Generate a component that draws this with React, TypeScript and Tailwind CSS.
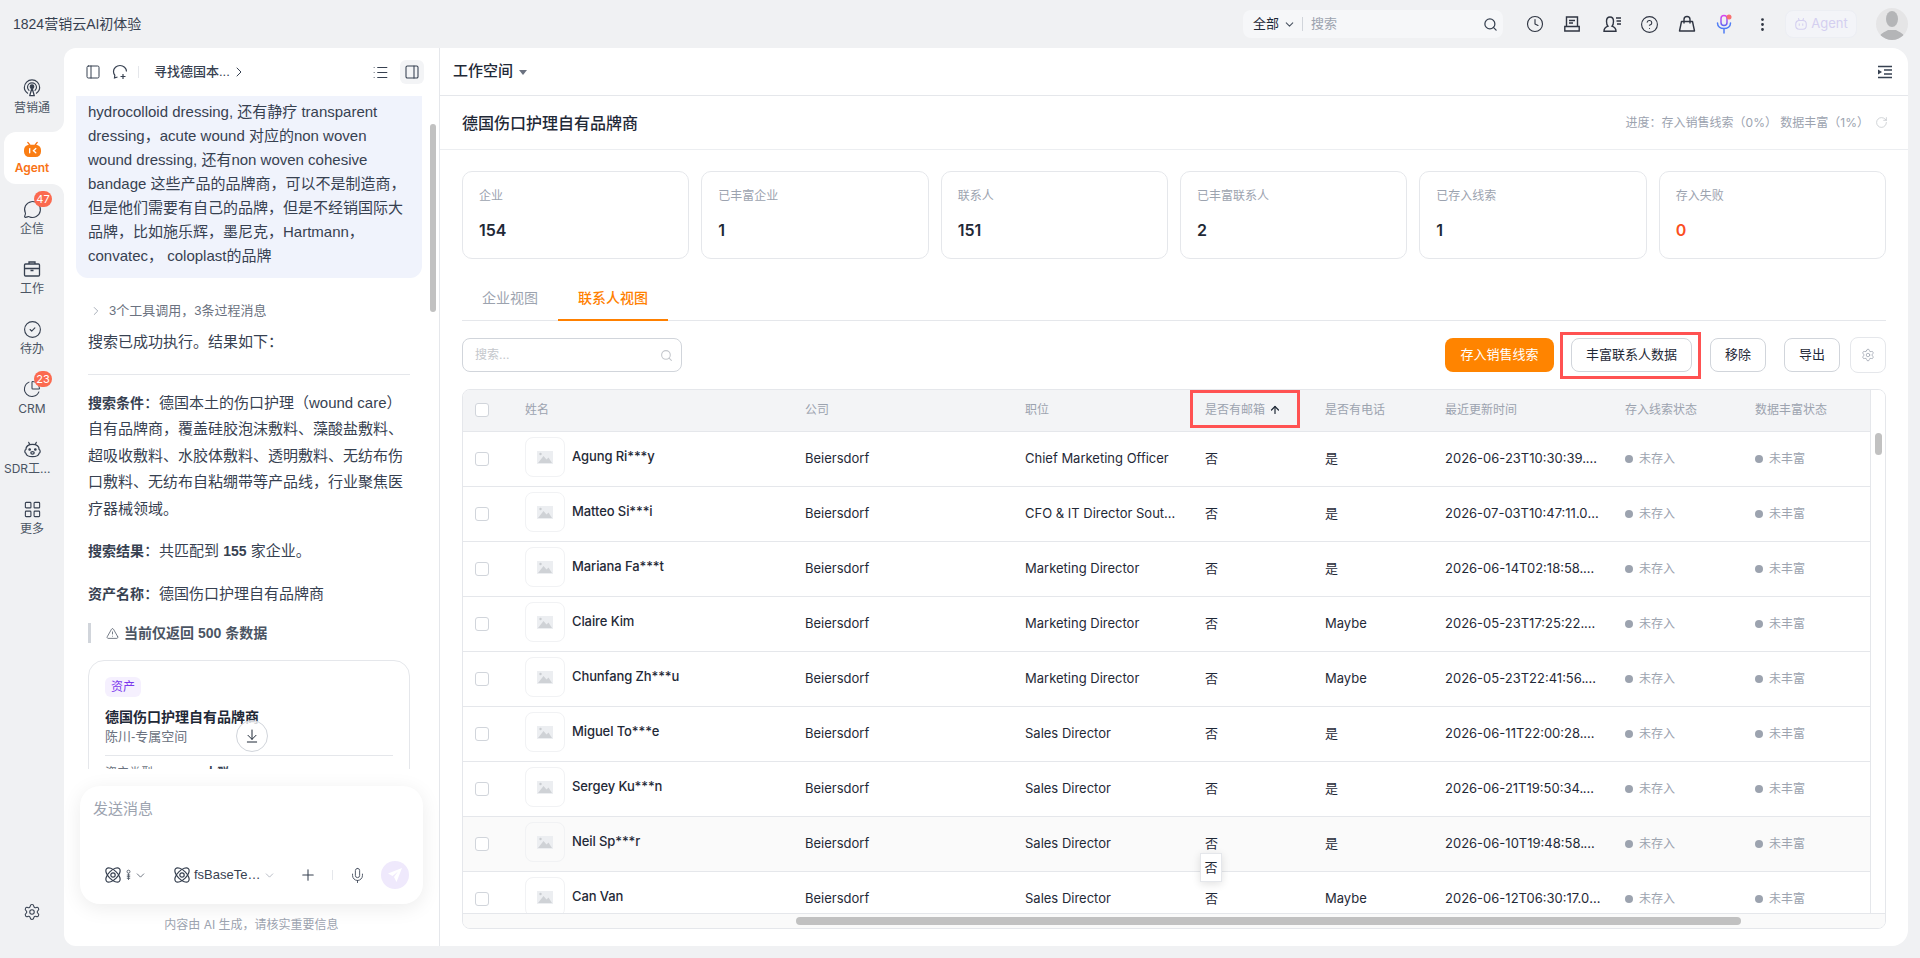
import React from "react";
import { ChevronDown, ChevronRight, Search, CircleHelp, Clock, EllipsisVertical, RotateCw, MessageCircle, CircleCheck, Settings, Plus, Mic, ArrowDownToLine, ArrowUp, TriangleAlert, List, PanelRight, PanelLeft, ChartPie, LayoutGrid } from "lucide-react";

const FONT = "font-['Inter','Noto_Sans_CJK_SC',sans-serif]";
const CHAT = "font-['Liberation_Sans','Noto_Sans_CJK_SC',sans-serif]";

function Atom({ className = "" }: { className?: string }) {
  return (
    <svg viewBox="0 0 16 16" fill="none" stroke="currentColor" strokeWidth="1.200" className={className}>
      <circle cx="8" cy="8" r="2.200" />
      <ellipse cx="8" cy="8" rx="9" ry="4.500" transform="rotate(45 8 8)" />
      <ellipse cx="8" cy="8" rx="9" ry="4.500" transform="rotate(-45 8 8)" />
    </svg>
  );
}

function BroadcastIcon() {
  return (
    <svg viewBox="0 0 20 20" fill="none" stroke="#374151" strokeWidth="1.300" className="w-[18px] h-[18px]">
      <path d="M5.500 16C3 14.500 1.500 12 1.500 9.500a8.500 8.500 0 0 1 17 0c0 2.500-1.500 5-4 6.500" />
      <path d="M7 13c-1.300-.9-2-2.300-2-3.700a5 5 0 0 1 10 0c0 1.400-.7 2.800-2 3.700" />
      <circle cx="10" cy="8.500" r="2" fill="#374151" />
      <path d="M10 10 L7.500 18.500 H12.500 Z" fill="#fff" strokeWidth="1.500" strokeLinejoin="round" />
    </svg>
  );
}

function AgentBot() {
  return (
    <svg viewBox="0 0 20 18" className="w-[19px] h-[17px]">
      <path d="M5 1.500 L7 4 M15 1.500 L13 4" stroke="#f97316" strokeWidth="1.400" strokeLinecap="round" />
      <rect x="1" y="4" width="18" height="13" rx="5.500" fill="#fa7d14" />
      <path d="M7 8v4.500" stroke="#fff" strokeWidth="1.400" strokeLinecap="round" />
      <path d="M13.500 8 L11 10.300 L13.500 12.500" stroke="#fff" strokeWidth="1.400" fill="none" strokeLinecap="round" />
    </svg>
  );
}

function BriefcaseIcon() {
  return (
    <svg viewBox="0 0 18 18" fill="none" stroke="#374151" strokeWidth="1.300" className="w-[18px] h-[18px]">
      <rect x="1.500" y="4" width="15" height="12" rx="1" />
      <path d="M6 4V2h6v2M1.500 8.500h15M7.500 10.500h3" />
    </svg>
  );
}

function BotFace() {
  return (
    <svg viewBox="0 0 20 18" fill="none" stroke="#374151" strokeWidth="1.300" className="w-[19px] h-[17px]">
      <path d="M6 1.500l1 2M14 1.500l-1 2" strokeLinecap="round" />
      <path d="M3 9c0-3.500 3-5.500 7-5.500s7 2 7 5.500c1.500.5 1.500 3.500 0 4-.5 2-3 3.500-7 3.500s-6.500-1.500-7-3.500c-1.500-.5-1.500-3.500 0-4z" />
      <circle cx="7" cy="9" r=".8" fill="#374151" />
      <circle cx="13" cy="9" r=".8" fill="#374151" />
      <ellipse cx="10" cy="12.500" rx="1.800" ry="1.300" />
    </svg>
  );
}

function NavItem({ icon, label, badge, clip }: { icon: React.ReactNode; label: string; badge?: string; clip?: boolean }) {
  return (
    <div className="h-[60px] w-16 shrink-0 flex flex-col items-center justify-start pt-[11px] relative">
      <div className="h-[20px] flex items-center justify-center">{icon}</div>
      <div className={clip ? "mt-[1px] pl-[4px] w-full text-left text-[12px] leading-[18px] text-[#4b5563] whitespace-nowrap" : "mt-[1px] text-[12px] leading-[18px] text-[#4b5563]"}>{label}</div>
      {badge && (
        <div className="absolute left-[34px] top-[3px] w-[18px] h-[16px] rounded-full bg-[#fb6a4f] text-white text-[11px] leading-[16px] text-center">{badge}</div>
      )}
    </div>
  );
}

function Sidebar() {
  return (
    <div className="w-16 shrink-0 flex flex-col pt-[19px] pb-[25px]">
      <NavItem icon={<BroadcastIcon />} label="营销通" />
      <div className="relative mt-[5px] mb-[4px] ml-1 w-[60px] h-[52px] shrink-0 bg-white rounded-l-xl flex flex-col items-center pt-[9px] pr-[4px]">
        <AgentBot />
        <div className="text-[12px] leading-[18px] font-semibold text-[#f97316] mt-[1px]">Agent</div>
        <div className="absolute right-0 -top-3 w-3 h-3 bg-white"><div className="w-3 h-3 bg-[#f0f1f3] rounded-br-xl" /></div>
        <div className="absolute right-0 -bottom-3 w-3 h-3 bg-white"><div className="w-3 h-3 bg-[#f0f1f3] rounded-tr-xl" /></div>
      </div>
      <NavItem icon={<MessageCircle className="w-[19px] h-[19px] text-[#374151]" strokeWidth={1.4} />} label="企信" badge="47" />
      <NavItem icon={<BriefcaseIcon />} label="工作" />
      <NavItem icon={<CircleCheck className="w-[19px] h-[19px] text-[#374151]" strokeWidth={1.4} />} label="待办" />
      <NavItem icon={<ChartPie className="w-[18px] h-[18px] text-[#374151]" strokeWidth={1.4} />} label="CRM" badge="23" />
      <NavItem icon={<BotFace />} label="SDR工..." clip />
      <NavItem icon={<LayoutGrid className="w-[19px] h-[19px] text-[#374151]" strokeWidth={1.4} />} label="更多" />
      <div className="mt-auto flex justify-center"><Settings className="w-[18px] h-[18px] text-[#374151]" strokeWidth={1.4} /></div>
    </div>
  );
}

function TopBar() {
  return (
    <div className="h-12 shrink-0 flex items-center pl-[13px] pr-3">
      <div className={`${CHAT} text-[14px] text-[#374151]`}>1824营销云AI初体验</div>
      <div className="ml-auto w-[260px] h-7 rounded-lg bg-[#f6f7f9] flex items-center pl-[10px] pr-[5px] text-[13px]">
        <span className="text-[#1f2937]">全部</span>
        <ChevronDown className="w-[13px] h-[13px] ml-1 text-[#4b5563]" />
        <span className="w-px h-[14px] bg-[#d1d5db] ml-[6px] mr-2" />
        <span className="text-[#9ca3af] flex-1">搜索</span>
        <Search className="w-[15px] h-[15px] text-[#374151]" />
      </div>
      <div className="ml-[23px] flex items-center text-[#2f3542]">
        <Clock className="w-[18px] h-[18px]" strokeWidth={1.5} />
        <svg viewBox="0 0 18 18" fill="none" stroke="currentColor" strokeWidth="1.400" className="w-[18px] h-[18px] ml-[19px]">
          <path d="M3.500 11.500V2h11v9.500M1.800 11.500H16.200V16H1.800zM6 5.500h6M6 8h4" />
        </svg>
        <svg viewBox="0 0 20 18" fill="none" stroke="currentColor" strokeWidth="1.400" className="w-[20px] h-[18px] ml-[22px]">
          <path d="M1 16.200c0-3 1.500-4 4-5-1.200-1.200-1.500-3-1.500-5C3.500 3.500 5 2 7 2s3.500 1.500 3.500 4.200c0 2-.3 3.800-1.500 5 2.500 1 4 2 4 5z" />
          <path d="M13 3h5M13.500 6h4.500M14 9h4" />
        </svg>
        <CircleHelp className="w-[19px] h-[19px] ml-[17px]" strokeWidth={1.4} />
        <svg viewBox="0 0 18 18" fill="none" stroke="currentColor" strokeWidth="1.400" className="w-[18px] h-[18px] ml-[19px]">
          <path d="M3.500 6.500h11L16.500 16H1.500z" strokeLinejoin="round" />
          <path d="M6 8.500V4.500a3 3 0 0 1 6 0v4" />
        </svg>
        <svg viewBox="0 0 18 20" fill="none" className="w-[18px] h-[20px] ml-[19px]">
          <defs>
            <linearGradient id="mic" x1="0" y1="0" x2="0" y2="1">
              <stop offset="0" stopColor="#d946ef" />
              <stop offset="1" stopColor="#6366f1" />
            </linearGradient>
          </defs>
          <rect x="6" y="1.500" width="6" height="10" rx="3" stroke="url(#mic)" strokeWidth="1.500" />
          <path d="M2.500 9c0 3.500 3 5.500 6.500 5.500s6.500-2 6.500-5.500M9 14.500V19" stroke="#4f7df5" strokeWidth="1.500" strokeLinecap="round" />
          <circle cx="14" cy="3" r="2.500" fill="#f87171" />
        </svg>
        <EllipsisVertical className="w-[17px] h-[17px] ml-[21px]" strokeWidth={2} />
      </div>
      <div className="ml-[14px] w-[72px] h-7 rounded-lg bg-[#f3f4f8] border border-[#eceef3] flex items-center justify-center gap-[3px] text-[13px] text-[#d4cff0]">
        <svg viewBox="0 0 16 16" fill="none" stroke="#d4cff0" strokeWidth="1.200" className="w-[14px] h-[14px]">
          <path d="M5 1.500l1 2.500M11 1.500l-1 2.500" />
          <rect x="2" y="4" width="12" height="10" rx="4" />
          <path d="M6 7.500v2.500M10 7.500v2.500" />
        </svg>
        Agent
      </div>
      <div className="ml-[19px] w-8 h-8 rounded-full bg-[#e5e5e6] overflow-hidden flex items-end justify-center">
        <svg viewBox="0 0 32 32" className="w-8 h-8" fill="#b4b5b7">
          <ellipse cx="16" cy="11" rx="6" ry="8" />
          <path d="M3 32c0-7 6-8 9-10h8c3 2 9 3 9 10z" />
        </svg>
      </div>
    </div>
  );
}

function ChatPanel() {
  const b = "font-semibold text-[14px]";
  return (
    <div className={`${CHAT} w-[376px] shrink-0 bg-white rounded-tl-xl rounded-bl-xl border-r border-[#e5e7eb] flex flex-col relative overflow-hidden`}>
      <div className="h-12 shrink-0 flex items-center pl-[21px] pr-[15px] text-[#374151]">
        <PanelLeft className="w-4 h-4" strokeWidth={1.5} />
        <svg viewBox="0 0 16 16" fill="none" stroke="currentColor" strokeWidth="1.200" className="w-4 h-4 ml-[11px]">
          <path d="M14.500 7.500C14.500 4 11.500 1.500 8 1.500S1.500 4 1.500 7.500c0 1.500.5 2.700 1.300 3.700L2.500 14l3-1" />
          <path d="M8.500 12.500h5M11 10v5" />
        </svg>
        <span className="w-px h-3 bg-[#e5e7eb] ml-[10px]" />
        <span className="ml-[15px] text-[13px] font-medium text-[#374151]">寻找德国本...</span>
        <ChevronRight className="w-4 h-4 ml-[1px]" strokeWidth={1.5} />
        <List className="w-[17px] h-[17px] ml-auto" strokeWidth={1.5} />
        <div className="ml-[11px] w-6 h-6 rounded-md bg-[#f3f4f6] flex items-center justify-center">
          <PanelRight className="w-4 h-4" strokeWidth={1.6} />
        </div>
      </div>

      <div className="h-[673px] shrink-0 overflow-hidden pl-3 pr-[17px] relative">
        <div className="bg-[#f0f3fc] rounded-b-xl px-3 pt-1 pb-[10px] text-[15px] leading-[24px] text-[#374151]">
          hydrocolloid dressing, 还有静疗 transparent dressing，acute wound 对应的non woven wound dressing, 还有non woven cohesive bandage 这些产品的品牌商，可以不是制造商，但是他们需要有自己的品牌，但是不经销国际大品牌，比如施乐辉，墨尼克，Hartmann， convatec， coloplast的品牌
        </div>
        <div className="mt-[24px] ml-[13px] flex items-center text-[13px] leading-[18px] text-[#6b7280]">
          <ChevronRight className="w-[14px] h-[14px] text-[#9ca3af] mr-[6px]" strokeWidth={1.5} />
          3个工具调用，3条过程消息
        </div>
        <div className="ml-3 text-[15px] text-[#374151]">
          <p className="mt-[10px] leading-[24px]">搜索已成功执行。结果如下：</p>
          <div className="h-px bg-[#e5e7eb] mt-[20px] w-[322px]" />
          <p className="mt-[15px] leading-[26.400px] w-[322px]"><b className={b}>搜索条件</b>：德国本土的伤口护理（wound care）自有品牌商，覆盖硅胶泡沫敷料、藻酸盐敷料、超吸收敷料、水胶体敷料、透明敷料、无纺布伤口敷料、无纺布自粘绷带等产品线，行业聚焦医疗器械领域。</p>
          <p className="mt-[16px] leading-[26px]"><b className={b}>搜索结果</b>：共匹配到 <b className={b}>155</b> 家企业。</p>
          <p className="mt-[17px] leading-[26px]"><b className={b}>资产名称</b>：德国伤口护理自有品牌商</p>
          <div className="mt-[16px] h-[20px] border-l-[3px] border-[#d1d5db] pl-[15px] flex items-center text-[14px] text-[#4b5563] font-semibold leading-[20px]">
            <TriangleAlert className="w-[13px] h-[13px] mr-[5px]" strokeWidth={1.4} />
            当前仅返回 500 条数据
          </div>
          <div className="mt-[17px] w-[322px] h-[200px] border border-[#e5e7eb] rounded-2xl px-4 pt-4">
            <div className="w-9 h-5 rounded-md bg-[#f5f0fe] text-[#7c3aed] text-[12px] leading-[20px] text-center">资产</div>
            <div className="mt-[9px] text-[14px] leading-[22px] font-semibold text-[#1f2937]">德国伤口护理自有品牌商</div>
            <div className="text-[13px] leading-[20px] text-[#6b7280] -mt-[1px]">陈川-专属空间</div>
            <div className="h-px bg-[#e5e7eb] mt-2" />
            <div className="mt-[8px] flex text-[12px] leading-[18px]"><span className="w-[100px] text-[#6b7280]">资产类型</span><span className="font-semibold">人群</span></div>
          </div>
        </div>
      </div>

      <div className="mx-4 mt-[17px] h-[118px] rounded-[20px] bg-white shadow-[0_4px_20px_rgba(0,0,0,0.08)] px-[13px] flex flex-col shrink-0">
        <div className="mt-[12px] text-[15px] leading-[22px] text-[#9ca3af]">发送消息</div>
        <div className="mt-auto mb-[15px] h-7 flex items-center text-[#374151]">
          <Atom className="w-4 h-4 ml-[12px]" />
          <svg viewBox="0 0 6 14" fill="none" stroke="#4b5563" strokeWidth="1" className="w-[5px] h-[14px] ml-[5px]">
            <circle cx="3" cy="3" r="1.800" />
            <path d="M3 5v8M1 7h4M1 9h4M1 11h4" />
          </svg>
          <ChevronDown className="w-[13px] h-[13px] ml-[3px]" strokeWidth={1.3} />
          <Atom className="w-4 h-4 ml-[27px]" />
          <span className="ml-[4px] w-[61px] text-[13px] whitespace-nowrap">fsBaseTe…</span>
          <ChevronDown className="w-[13px] h-[13px] ml-[8px] text-[#9ca3af]" strokeWidth={1.3} />
          <Plus className="w-[18px] h-[18px] ml-[23px]" strokeWidth={1.4} />
          <span className="w-px h-[10px] bg-[#e5e7eb] ml-[15px]" />
          <Mic className="w-[17px] h-[17px] ml-[16px]" strokeWidth={1.2} />
          <div className="ml-[15px] w-7 h-7 rounded-full bg-[#efe9fc] flex items-center justify-center">
            <svg viewBox="0 0 16 16" className="w-4 h-4" fill="#fff"><path d="M15 1L1 6.500l4.500 2.500L11 4.500 7 10l2.500 5z" /></svg>
          </div>
        </div>
      </div>
      <div className={`${FONT} mt-[12px] text-center text-[12px] leading-[18px] text-[#9ca3af]`}>内容由 AI 生成，请核实重要信息</div>

      <div className="absolute left-[366px] top-[76px] w-[6px] h-[188px] rounded-full bg-[#c1c1c1]" />
      <div className="absolute left-[172px] top-[672px] w-8 h-8 rounded-full border border-[#d1d5db] bg-white/80 flex items-center justify-center">
        <ArrowDownToLine className="w-4 h-4 text-[#1f2937]" strokeWidth={1.5} />
      </div>
    </div>
  );
}

const stats: [string, string, string?][] = [
  ["企业", "154"],
  ["已丰富企业", "1"],
  ["联系人", "151"],
  ["已丰富联系人", "2"],
  ["已存入线索", "1"],
  ["存入失败", "0", "text-[#fb4f1f]"],
];

const rows: [string, string, string, string][] = [
  ["Agung Ri***y", "Chief Marketing Officer", "是", "2026-06-23T10:30:39.000Z"],
  ["Matteo Si***i", "CFO & IT Director South Europe", "是", "2026-07-03T10:47:11.000Z"],
  ["Mariana Fa***t", "Marketing Director", "是", "2026-06-14T02:18:58.000Z"],
  ["Claire Kim", "Marketing Director", "Maybe", "2026-05-23T17:25:22.000Z"],
  ["Chunfang Zh***u", "Marketing Director", "Maybe", "2026-05-23T22:41:56.000Z"],
  ["Miguel To***e", "Sales Director", "是", "2026-06-11T22:00:28.000Z"],
  ["Sergey Ku***n", "Sales Director", "是", "2026-06-21T19:50:34.000Z"],
  ["Neil Sp***r", "Sales Director", "是", "2026-06-10T19:48:58.000Z"],
  ["Can Van", "Sales Director", "Maybe", "2026-06-12T06:30:17.000Z"],
];

function Status({ label }: { label: string }) {
  return (
    <div className="flex items-center text-[12px] text-[#9ca3af]">
      <span className="w-2 h-2 rounded-full bg-[#9ca3af] mr-[6px]" />
      {label}
    </div>
  );
}

function Checkbox() {
  return <div className="w-[14px] h-[14px] rounded-[3px] border border-[#d1d5db] bg-white" />;
}

function ImagePlaceholder() {
  return (
    <svg viewBox="0 0 16 13" className="w-4 h-[13px]">
      <rect width="16" height="13" fill="#eceef1" />
      <circle cx="3.500" cy="3" r="1.200" fill="#c9ccd1" />
      <path d="M1 12 L6.500 5 L9.500 8.500 L11.500 6.500 L15 12 Z" fill="#cfd2d6" />
    </svg>
  );
}

function DataTable() {
  const th = "text-left font-normal text-[12px] text-[#9ca3af] px-3";
  const td = "px-3 text-[13px] text-[#1f2937] truncate";
  return (
    <div className="mt-[17px] h-[540px] border border-[#e5e7eb] rounded-lg overflow-hidden flex flex-col">
      <div className="flex-1 flex min-h-0">
        <div className="flex-1 min-w-0 overflow-hidden">
          <table className="w-full table-fixed border-collapse">
            <colgroup>
              <col className="w-[50px]" />
              <col className="w-[280px]" />
              <col className="w-[220px]" />
              <col className="w-[180px]" />
              <col className="w-[120px]" />
              <col className="w-[120px]" />
              <col className="w-[180px]" />
              <col className="w-[130px]" />
              <col />
            </colgroup>
            <thead>
              <tr className="h-[41px] bg-[#f3f4f6] border-b border-[#e5e7eb]">
                <th className="pl-3"><Checkbox /></th>
                <th className={th}>姓名</th>
                <th className={th}>公司</th>
                <th className={th}>职位</th>
                <th className={th}>
                  <span className="inline-flex items-center">是否有邮箱<ArrowUp className="w-3 h-3 ml-[4px] text-[#1f2937]" strokeWidth={2.400} /></span>
                </th>
                <th className={th}>是否有电话</th>
                <th className={th}>最近更新时间</th>
                <th className={th}>存入线索状态</th>
                <th className={th}>数据丰富状态</th>
              </tr>
            </thead>
            <tbody>
              {rows.map((r, i) => (
                <tr key={r[0]} className={i === 7 ? "h-[55px] border-b border-[#e5e7eb] bg-[#fafafa]" : "h-[55px] border-b border-[#e5e7eb]"}>
                  <td className="pl-3"><Checkbox /></td>
                  <td className="px-3">
                    <div className="flex items-center">
                      <div className="w-10 h-10 rounded-lg border border-[#f1f2f4] flex items-center justify-center -mt-[3px]">
                        <ImagePlaceholder />
                      </div>
                      <span className="ml-[7px] text-[13px] tracking-[-0.1px] font-medium text-[#1f2937] -mt-[3px]">{r[0]}</span>
                    </div>
                  </td>
                  <td className={td}>Beiersdorf</td>
                  <td className={td}>{r[1]}</td>
                  <td className={td}>否</td>
                  <td className={td}>{r[2]}</td>
                  <td className={td}>{r[3]}</td>
                  <td className="px-3"><Status label="未存入" /></td>
                  <td className="px-3"><Status label="未丰富" /></td>
                </tr>
              ))}
            </tbody>
          </table>
        </div>
        <div className="w-[15px] shrink-0 border-l border-[#e5e7eb] bg-white pl-[4px] pt-[43px]">
          <div className="w-[7px] h-[22px] rounded-full bg-[#c1c1c1]" />
        </div>
      </div>
      <div className="h-[15px] shrink-0 bg-[#fafafa] border-t border-[#e5e7eb] pl-[333px] pt-[3px]">
        <div className="w-[945px] h-2 rounded-full bg-[#c1c1c1]" />
      </div>
    </div>
  );
}

function WorkPanel() {
  return (
    <div className="flex-1 min-w-0 bg-white rounded-tr-2xl rounded-br-2xl flex flex-col relative overflow-hidden">
      <div className="h-12 shrink-0 border-b border-[#e5e7eb] flex items-center pl-[13px] pr-[16px]">
        <span className="text-[15px] font-medium text-[#1f2937]">工作空间</span>
        <span className="ml-[6px] mt-[2px] w-0 h-0 border-l-[4px] border-r-[4px] border-t-[5px] border-l-transparent border-r-transparent border-t-[#6b7280]" />
        <svg viewBox="0 0 14 14" fill="none" className="w-[14px] h-[14px] ml-auto">
          <path d="M0 1.500h14M6 5h8M6 9h8M0 12.500h14" stroke="#374151" strokeWidth="1.500" />
          <path d="M0 4.500 L4 7 L0 9.500 Z" fill="#374151" />
        </svg>
      </div>
      <div className="h-[54px] shrink-0 border-b border-[#eceef1] flex items-center pl-[22px] pr-[20px]">
        <span className="text-[16px] font-medium text-[#1f2937]">德国伤口护理自有品牌商</span>
        <span className="ml-auto text-[12px] text-[#9ca3af]">进度：存入销售线索（0%） 数据丰富（1%）</span>
        <RotateCw className="w-[13px] h-[13px] ml-[6px] text-[#c4c7cc]" strokeWidth={1.400} />
      </div>
      <div className="flex-1 min-h-0 pl-[22px] pr-[22px] pt-[21px]">
        <div className="grid grid-cols-6 gap-3">
          {stats.map(([k, v, c]) => (
            <div key={k} className="h-[88px] rounded-[10px] border border-[#e5e7eb] pl-4 pt-[15px]">
              <div className="text-[12px] leading-[18px] text-[#9ca3af]">{k}</div>
              <div className={`mt-[13px] text-[16px] leading-[24px] font-semibold ${c ?? "text-[#1f2937]"}`}>{v}</div>
            </div>
          ))}
        </div>
        <div className="mt-[25px] h-[37px] border-b border-[#e5e7eb] flex text-[14px]">
          <div className="px-5 pt-[3px] text-[#9ca3af]">企业视图</div>
          <div className="px-5 pt-[3px] h-[37px] text-[#ff8000] font-medium border-b-2 border-[#ff8000]">联系人视图</div>
        </div>
        <div className="mt-[17px] h-[34px] flex items-center">
          <div className="w-[220px] h-[34px] rounded-lg border border-[#d1d5db] flex items-center pl-3 pr-2 text-[12px] text-[#c4c7cc]">
            搜索...
            <Search className="w-[13px] h-[13px] ml-auto text-[#c4c7cc]" />
          </div>
          <div className="ml-auto flex items-center">
            <button className="w-[109px] h-[34px] rounded-lg bg-[#ff8400] text-white text-[13px]">存入销售线索</button>
            <button className="ml-[17px] w-[121px] h-[34px] rounded-lg border border-[#d1d5db] bg-white text-[13px] text-[#1f2937]">丰富联系人数据</button>
            <button className="ml-[18px] w-[56px] h-[34px] rounded-lg border border-[#d1d5db] bg-white text-[13px] text-[#1f2937]">移除</button>
            <button className="ml-[18px] w-[56px] h-[34px] rounded-lg border border-[#d1d5db] bg-white text-[13px] text-[#1f2937]">导出</button>
            <button className="ml-[10px] w-[36px] h-[36px] rounded-lg border border-[#e5e7eb] bg-white flex items-center justify-center">
              <Settings className="w-[14px] h-[14px] text-[#9ca3af]" strokeWidth={1.300} />
            </button>
          </div>
        </div>
        <DataTable />
      </div>

      <div className="absolute left-[1120px] top-[284px] w-[141px] h-[47px] border-[3px] border-[#ff5252]" />
      <div className="absolute left-[750px] top-[342px] w-[110px] h-[38px] border-[3px] border-[#ff5252]" />
      <div className="absolute left-[760px] top-[805px] w-[22px] h-[29px] bg-white border border-[#e5e7eb] shadow-[0_2px_8px_rgba(0,0,0,0.12)] text-[13px] leading-[27px] text-center text-[#1f2937]">否</div>
    </div>
  );
}

export default function App() {
  return (
    <div className={`${FONT} w-[1920px] h-[958px] bg-[#f0f1f3] flex flex-col overflow-hidden`}>
      <TopBar />
      <div className="flex-1 min-h-0 flex pr-3 pb-3">
        <Sidebar />
        <ChatPanel />
        <WorkPanel />
      </div>
    </div>
  );
}
